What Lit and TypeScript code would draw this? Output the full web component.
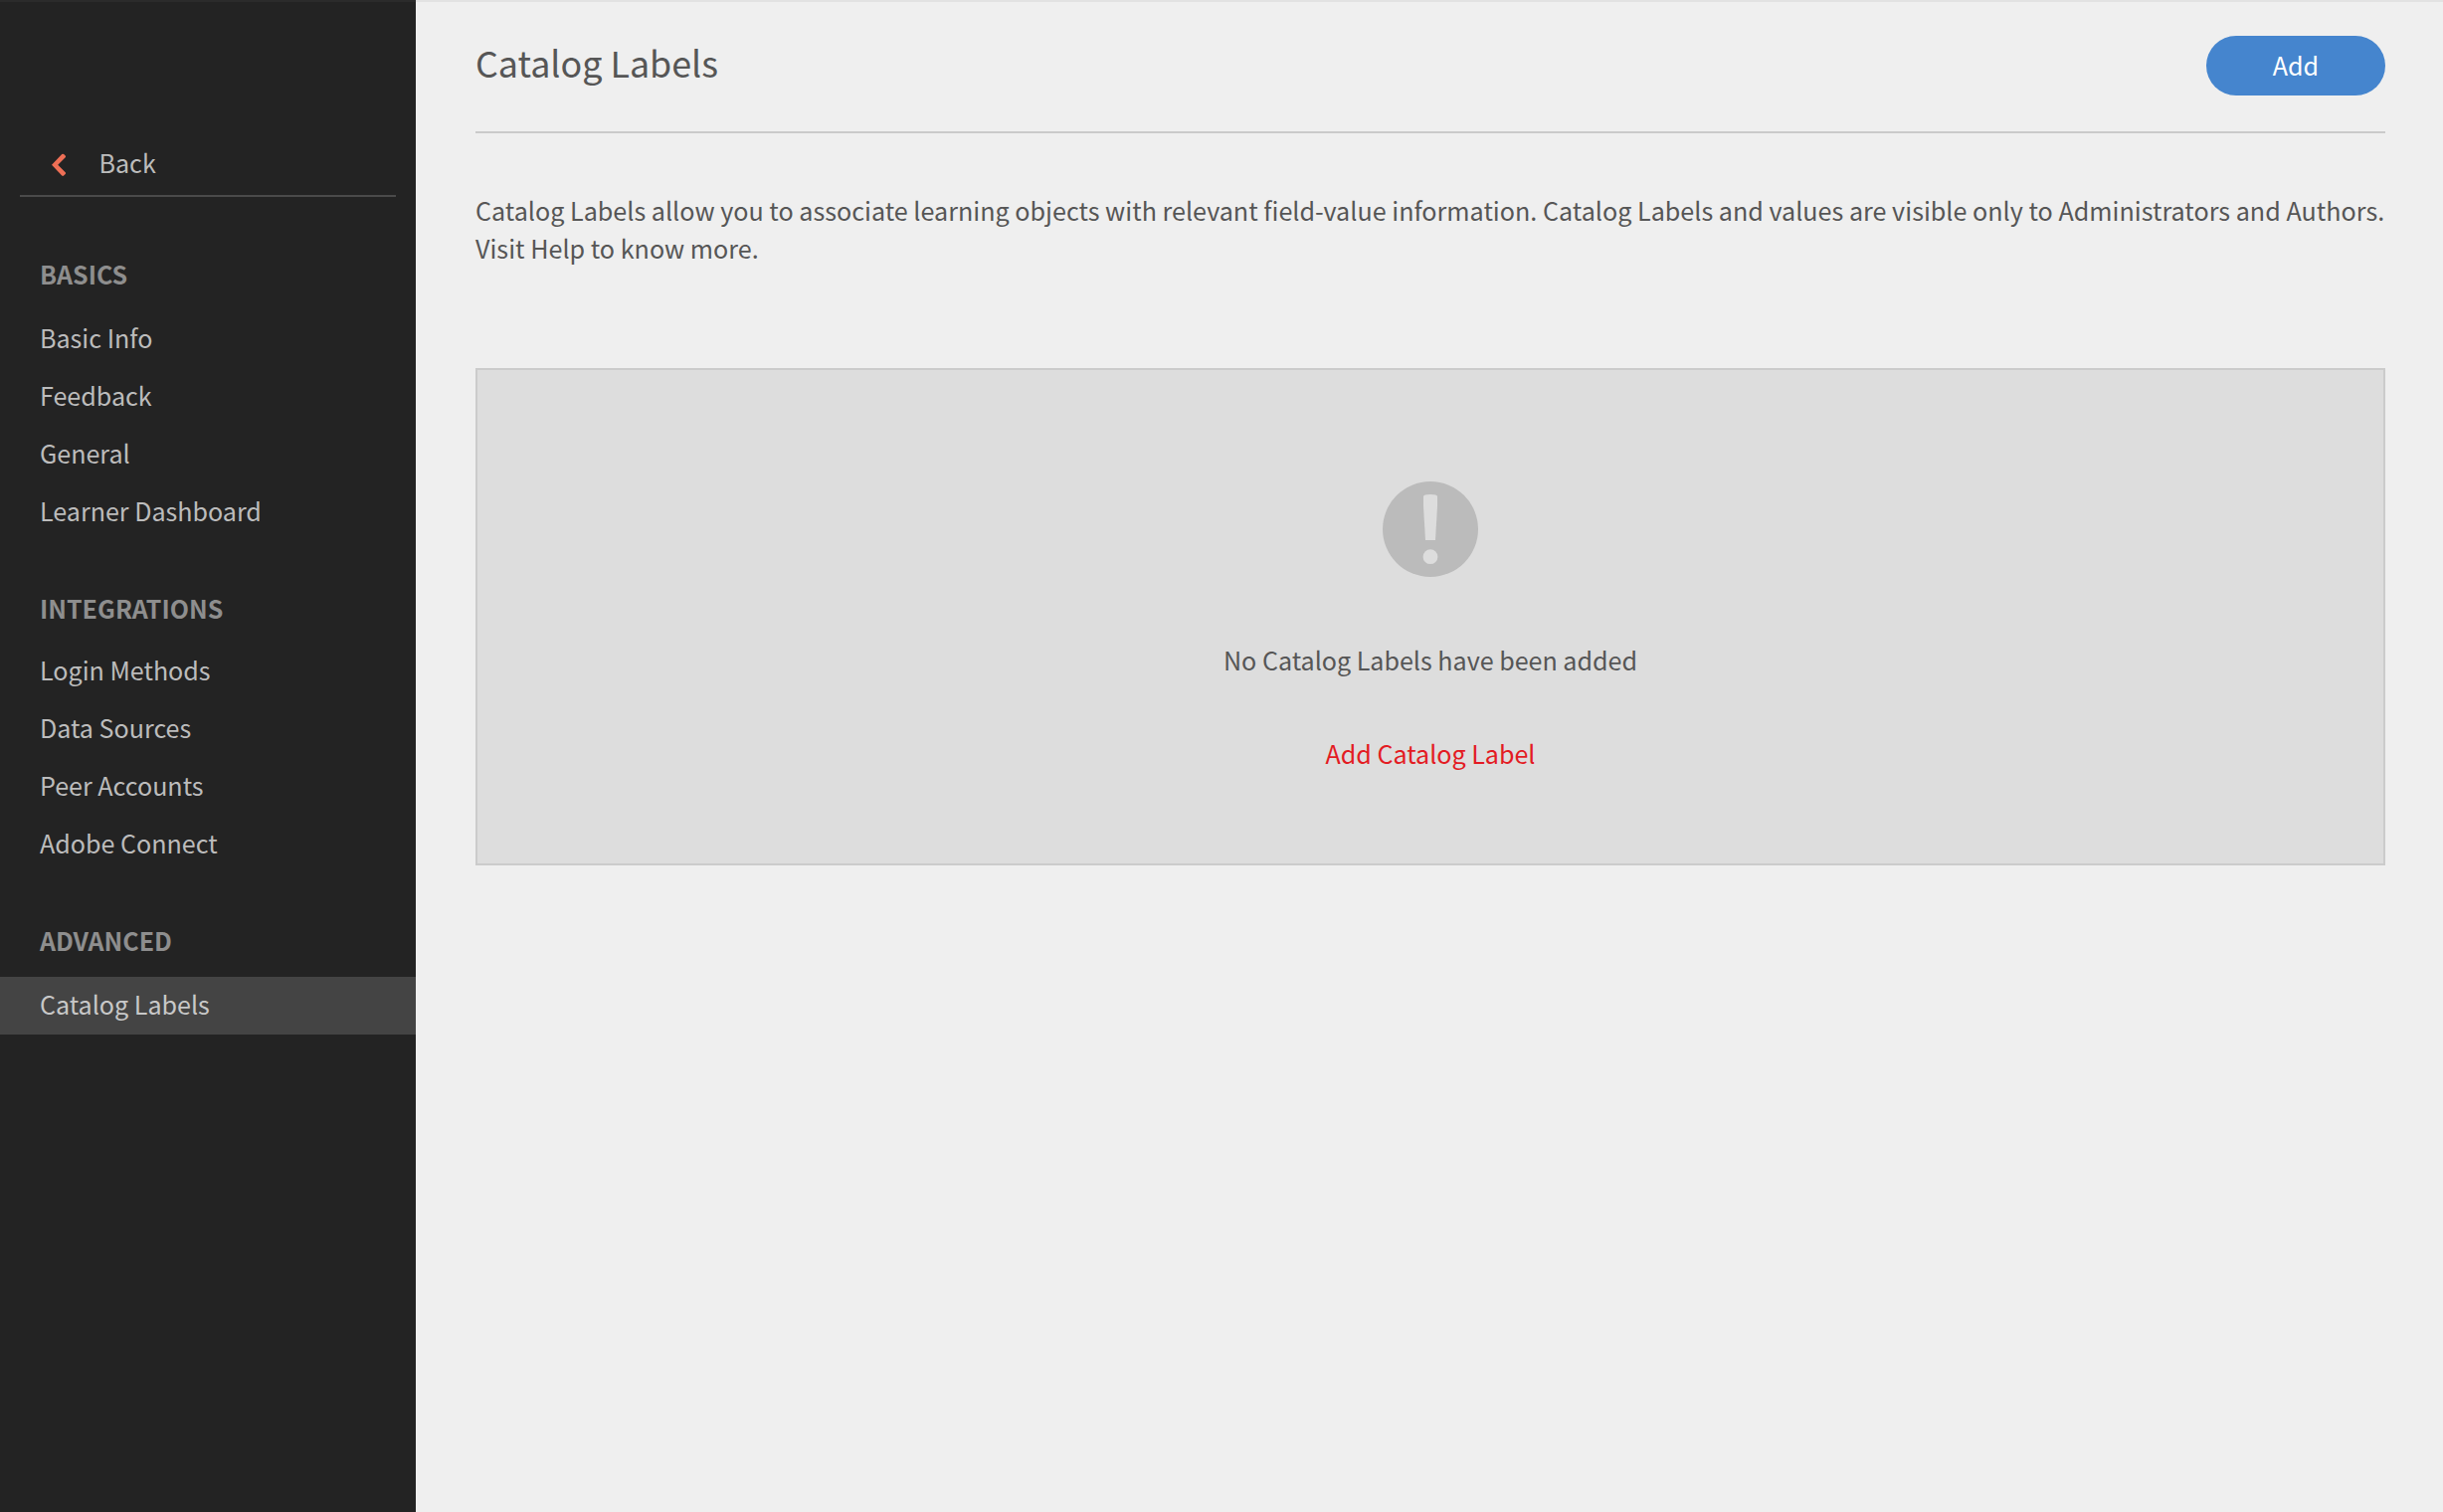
import { LitElement, html, css } from "lit";
import { customElement, state } from "lit/decorators.js";

const sections = [
  { title: "BASICS", items: ["Basic Info", "Feedback", "General", "Learner Dashboard"] },
  { title: "INTEGRATIONS", items: ["Login Methods", "Data Sources", "Peer Accounts", "Adobe Connect"] },
  { title: "ADVANCED", items: ["Catalog Labels"] },
];

@customElement("app-root")
export class AppRoot extends LitElement {
  @state() active = "Catalog Labels";

  static styles = css`
    :host { display: flex; height: 1520px; box-sizing: border-box; background: #efefef; color: #565656;
      font: 25.08px/36px "Noto Sans CJK SC", sans-serif; }
    .side { width: 418px; flex: none; background: #232323; color: #bcbcbc; box-sizing: border-box; border-top: 2px solid #2b2b2b; padding-top: 143px; }
    .back { display: flex; height: 51px; margin: 0 20px; padding-left: 32px; border-bottom: 2px solid #4a4a4a; }
    .chev { width: 14px; height: 24px; margin: 9px 33.5px 0 0; }
    .head { font-size: 25px; font-weight: 700; line-height: 36px; color: #8e8e8e; margin: 49px 0 19px; padding-left: 40px; }
    .sec:nth-of-type(2) .head { margin-top: 59px; }
    .sec:nth-of-type(3) .head { margin-bottom: 17px; }
    .item { line-height: 54px; padding: 0 0 4px 40px; }
    .on { background: #444; color: #c8c8c8; }
    .main { flex: 1; border-top: 2px solid #e2e2e2; padding: 34px 58px 0 60px; }
    .top { display: flex; justify-content: space-between; align-items: flex-start; height: 96px; border-bottom: 2px solid #cacaca; }
    h1 { margin: 0; font-size: 35.85px; line-height: 52px; font-weight: 400; }
    .btn { font: inherit; color: #fff; background: #4585ce; border: 0; border-radius: 30px; width: 180px; height: 60px; padding: 11px 0 13px; }
    p { margin: 58px 0 102px; font-size: 25.12px; line-height: 38px; letter-spacing: 0.014px; white-space: nowrap; }
    .empty { display: flex; flex-direction: column; align-items: center; box-sizing: border-box; height: 500px; border: 2px solid #cbcbcb; background: #ddd; padding-top: 112px; }
    .icon { width: 96px; height: 96px; margin-bottom: 65px; }
    .link { color: #e31b23; margin-top: 58px; }
  `;

  render() {
    return html`
      <nav class="side">
        <div class="back">
          <svg class="chev" viewBox="0 0 14 24"><path d="M0 11.800 10.200 1.100q1-.9 1.900 0L13.700 2.600q.7.9 0 1.700L6.200 11.800l7.500 7.500q.7.900 0 1.700l-1.600 1.500q-.9.900-1.900 0z" fill="#ee6f56"/></svg>
          <span>Back</span>
        </div>
        ${sections.map((s) => html`<div class="sec">
          <div class="head">${s.title}</div>
          ${s.items.map((i) => html`<div class="item ${i === this.active ? "on" : ""}">${i}</div>`)}
        </div>`)}
      </nav>
      <main class="main">
        <div class="top"><h1>Catalog Labels</h1><button class="btn">Add</button></div>
        <p>Catalog Labels allow you to associate learning objects with relevant field-value information. Catalog Labels and values are visible only to Administrators and Authors.<br />Visit Help to know more.</p>
        <div class="empty">
          <svg class="icon" viewBox="0 0 96 96"><circle cx="48" cy="48" r="48" fill="#bbb"/><path d="M41 15q0-2 7-2t7 2v10l-2 34H43l-2-34z" fill="#ddd"/><circle cx="48" cy="75.7" r="7.4" fill="#ddd"/></svg>
          <span>No Catalog Labels have been added</span>
          <span class="link">Add Catalog Label</span>
        </div>
      </main>`;
  }
}
